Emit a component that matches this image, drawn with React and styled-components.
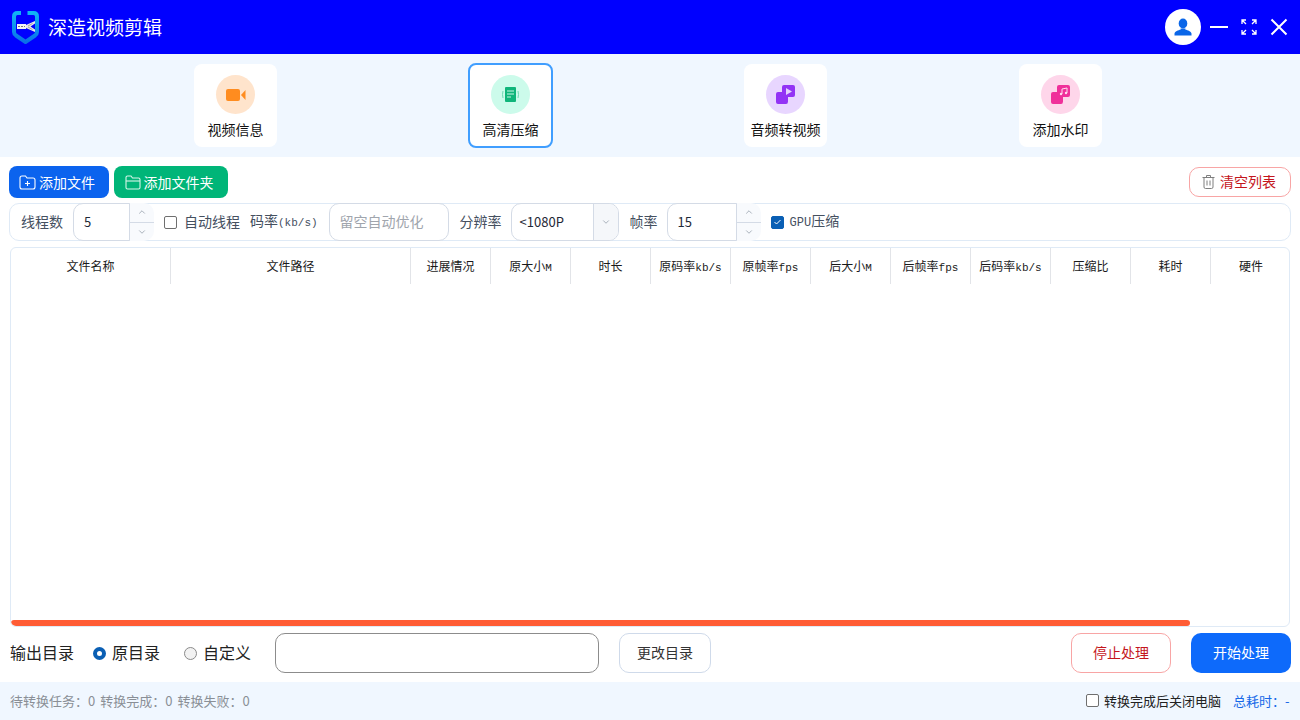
import React from 'react';
import styled, { createGlobalStyle } from 'styled-components';
import { ChevronUp, ChevronDown } from 'lucide-react';

const GlobalStyle = createGlobalStyle`
  html, body { margin: 0; padding: 0; background: #fff; }
  * { box-sizing: border-box; }
  body { font-family: "Noto Sans CJK SC", "Noto Sans", sans-serif; }
`;

const Page = styled.div`
  width: 1300px;
  height: 720px;
  display: flex;
  flex-direction: column;
  overflow: hidden;
`;

const TitleBar = styled.header`
  height: 54px;
  flex: none;
  background: #0000ff;
  display: flex;
  align-items: center;
  padding-left: 12px;
  color: #fff;
`;

const AppName = styled.div`
  margin-left: 9px;
  font-size: 19px;
  line-height: 26px;
`;

const WindowControls = styled.div`
  margin-left: auto;
  display: flex;
  align-items: center;
`;

const Avatar = styled.div`
  width: 36px;
  height: 36px;
  border-radius: 50%;
  background: #fff;
  display: flex;
  align-items: center;
  justify-content: center;
`;

const WinButton = styled.div`
  display: flex;
  margin-left: ${({ $ml }) => $ml}px;
  margin-right: ${({ $mr }) => $mr || 0}px;
`;

const NavBand = styled.nav`
  height: 103px;
  flex: none;
  background: #f0f7ff;
  display: grid;
  grid-template-columns: repeat(4, 275px);
  padding-left: 98px;
  align-items: center;
  justify-items: center;
`;

const NavCard = styled.div`
  width: ${({ $active }) => ($active ? 85 : 83)}px;
  height: ${({ $active }) => ($active ? 85 : 83)}px;
  background: #fff;
  border-radius: 8px;
  border: ${({ $active }) => ($active ? '2px solid #409eff' : 'none')};
  display: flex;
  flex-direction: column;
  align-items: center;
  padding-top: ${({ $active }) => ($active ? 10 : 11)}px;
`;

const NavCircle = styled.div`
  width: 39px;
  height: 39px;
  border-radius: 50%;
  background: ${({ $bg }) => $bg};
  display: flex;
  align-items: center;
  justify-content: center;
`;

const NavLabel = styled.div`
  margin-top: 5px;
  font-size: 14px;
  line-height: 20px;
  color: #111;
  white-space: nowrap;
`;

const Main = styled.main`
  flex: 1;
  min-height: 0;
  display: flex;
  flex-direction: column;
  padding: 9px 9px 9px;
`;

const Toolbar = styled.div`
  height: 32px;
  flex: none;
  display: flex;
  align-items: center;
  gap: 5px;
`;

const ActionButton = styled.button`
  height: 32px;
  width: ${({ $w }) => $w}px;
  border: none;
  border-radius: 8px;
  background: ${({ $bg }) => $bg};
  color: #fff;
  font: inherit;
  font-size: 14px;
  display: flex;
  align-items: center;
  justify-content: center;
  gap: 3px;
  padding: 0 4px 1px 0;
  svg { margin-top: 1px; }
`;

const OutlineButton = styled.button`
  height: ${({ $h }) => $h}px;
  width: ${({ $w }) => $w}px;
  background: #fff;
  border: 1px solid ${({ $danger }) => ($danger ? '#f8a5a5' : '#cfdaea')};
  border-radius: ${({ $r }) => $r}px;
  color: ${({ $danger }) => ($danger ? '#c4161c' : '#333')};
  font: inherit;
  font-size: 14px;
  display: flex;
  align-items: center;
  justify-content: center;
  gap: 5px;
  padding: 0 0 2px 0;
`;

const ClearButton = styled(OutlineButton)`
  margin-left: auto;
  padding: 0 2px 2px 0;
  svg { margin-top: 2px; }
`;

const ParamRow = styled.div`
  height: 38px;
  flex: none;
  margin-top: 5px;
  border: 1px solid #dfeaf6;
  border-radius: 10px;
  display: flex;
  align-items: center;
  padding-left: 11px;
  color: #45505f;
  font-size: 14px;
`;

const ParamLabel = styled.span`
  margin-left: ${({ $ml }) => $ml || 0}px;
  padding-bottom: 2px;
  white-space: nowrap;
  line-height: 20px;
`;

const Mono = styled.span`
  font-family: "Liberation Mono", monospace;
  font-size: ${({ $size }) => $size || 11}px;
`;

const FieldBox = styled.div`
  height: 38px;
  width: ${({ $w }) => $w}px;
  margin-left: ${({ $ml }) => $ml}px;
  flex: none;
  display: flex;
  align-items: center;
  border: 1px solid #d4dbe6;
  border-radius: ${({ $right }) => ($right ? '10px' : '10px 0 0 10px')};
  background: #fff;
  padding: 0 0 2px 10px;
  font-size: ${({ $muted }) => ($muted ? 14 : 13)}px;
  color: ${({ $muted }) => ($muted ? '#a0a5ad' : '#1f2937')};
`;

const Spinner = styled.div`
  width: 24px;
  height: 38px;
  flex: none;
  display: flex;
  flex-direction: column;
  background: #f8fafd;
  border-radius: 0 10px 10px 0;
  color: #9aa3af;
`;

const SpinHalf = styled.div`
  flex: 1;
  display: flex;
  align-items: center;
  justify-content: center;
  border-top: ${({ $line }) => ($line ? '1px solid #d4dbe6' : 'none')};
`;

const SelectBox = styled.div`
  height: 38px;
  width: 108px;
  margin-left: 9px;
  flex: none;
  display: flex;
  border: 1px solid #d4dbe6;
  border-radius: 10px;
  background: #fff;
  overflow: hidden;
  font-size: 13px;
  color: #1f2937;
`;

const SelectValue = styled.div`
  flex: 1;
  display: flex;
  align-items: center;
  padding: 0 0 2px 8px;
`;

const SelectArrow = styled.div`
  width: 25px;
  display: flex;
  align-items: center;
  justify-content: center;
  background: #f5f7fa;
  border-left: 1px solid #d4dbe6;
  color: #9aa3af;
`;

const CheckMark = styled.span`
  width: 13px;
  height: 13px;
  flex: none;
  margin-left: ${({ $ml }) => $ml || 0}px;
  border-radius: 2px;
  border: 1px solid ${({ $checked }) => ($checked ? '#0a5fb4' : '#6f6f6f')};
  background: ${({ $checked }) => ($checked ? '#0a5fb4' : '#fff')};
  display: flex;
  align-items: center;
  justify-content: center;
`;

const TableBox = styled.section`
  flex: 1;
  min-height: 0;
  margin: 6px 1px 0;
  border: 1px solid #dfeaf6;
  border-radius: 6px;
  position: relative;
  overflow: hidden;
`;

const HeadRow = styled.div`
  display: grid;
  grid-template-columns: 160px 240px repeat(11, 80px);
  height: 36px;
  color: #1a1a1a;
  font-size: 12px;
`;

const HeadCell = styled.div`
  display: flex;
  align-items: center;
  justify-content: center;
  padding-bottom: 2px;
  border-right: 1px solid #e2e4e8;
  white-space: nowrap;
  &:last-child { border-right: none; }
`;

const ScrollThumb = styled.div`
  position: absolute;
  left: 0;
  bottom: 0;
  width: 1179px;
  height: 6px;
  border-radius: 3px;
  background: #ff5c35;
`;

const OutputRow = styled.div`
  height: 40px;
  flex: none;
  margin-top: 6px;
  display: flex;
  align-items: center;
  color: #222;
`;

const OutputTitle = styled.span`
  margin-left: 1px;
  padding-bottom: 2px;
  font-size: 16px;
  line-height: 22px;
`;

const Radio = styled.span`
  width: 13px;
  height: 13px;
  flex: none;
  margin-left: ${({ $ml }) => $ml}px;
  border-radius: 50%;
  border: ${({ $on }) => ($on ? '4px solid #0a5fb4' : '1px solid #8a8a8a')};
  background: ${({ $on }) => ($on ? '#fff' : '#f2f2f2')};
`;

const RadioText = styled.span`
  margin-left: 6px;
  padding-bottom: 2px;
  font-size: 16px;
  line-height: 22px;
`;

const PathInput = styled.div`
  width: 324px;
  height: 40px;
  margin-left: 24px;
  border: 1px solid #8c8c8c;
  border-radius: 10px;
`;

const ChangeDirSlot = styled.div`
  margin-left: 20px;
`;

const RunGroup = styled.div`
  margin-left: auto;
  display: flex;
  gap: 20px;
`;

const StartButton = styled(ActionButton)`
  height: 40px;
  width: 100px;
  border-radius: 10px;
  padding: 0 0 2px;
`;

const StatusBar = styled.footer`
  height: 38px;
  flex: none;
  background: #f0f7ff;
  display: flex;
  align-items: center;
  padding: 0 9px 2px 10px;
  font-size: 13px;
  color: #8a8f96;
`;

const StatusText = styled.span`
  margin-right: 5px;
`;

const StatusRight = styled.div`
  margin-left: auto;
  display: flex;
  align-items: center;
`;

const ShutdownText = styled.span`
  margin-left: 5px;
  color: #222;
`;

const TotalTime = styled.span`
  margin-left: 12px;
  min-width: 58px;
  color: #1568e8;
`;

const Logo = () => (
  <svg width="27" height="33" viewBox="0 0 27 33">
    <defs>
      <linearGradient id="shield" x1="0" y1="0" x2="0" y2="1">
        <stop offset="0" stopColor="#10b4f5" />
        <stop offset="1" stopColor="#0a70e8" />
      </linearGradient>
    </defs>
    <path
      d="M9 2H5.500Q2 2 2 5.500V21Q2 23 4 24.500L13.500 31L23 24.500Q25 23 25 21V5.500Q25 2 21.500 2H15.500"
      fill="none"
      stroke="url(#shield)"
      strokeWidth="4"
    />
    <path d="M5 13H14V18H5Z" fill="#f4f4f4" />
    <path d="M6 15.500H13" stroke="#777" strokeWidth="1" strokeDasharray="2 1" />
    <path d="M14 14L23 10V12.500L18.500 15.500L23 18.500V21L14 17Z" fill="#e8e8e8" />
    <path d="M16 15L20.500 12.500M16 16L20.500 18.500" stroke="#888" strokeWidth="0.7" />
  </svg>
);

const UserIcon = () => (
  <svg width="18" height="18" viewBox="0 0 18 18" fill="#0a66e8">
    <ellipse cx="9" cy="5.500" rx="4.300" ry="5" />
    <path d="M6.500 10.500L6.800 11.500C4 12.500 1 13 .500 15.500V17.500H17.500V15.500C17 13 14 12.500 11.200 11.500L11.500 10.500Z" />
  </svg>
);

const ExpandIcon = () => (
  <svg width="16" height="16" viewBox="0 0 16 16" fill="none" stroke="#fff" strokeWidth="1.300">
    <path d="M1 5V1H5M1 1L5 5M11 1H15V5M15 1L11 5M1 11V15H5M1 15L5 11M11 15H15V11M15 15L11 11" />
  </svg>
);

const VideoIcon = () => (
  <svg width="20" height="14" viewBox="0 0 20 14" fill="#ff8c1f">
    <rect x="0" y="1" width="14" height="12" rx="2" />
    <path d="M15 7L19.500 2V12Z" />
  </svg>
);

const CompressIcon = () => (
  <svg width="17" height="16" viewBox="0 0 17 16">
    <rect x="3" y="0" width="11" height="15" rx="1" fill="#0fb57a" />
    <path d="M5 4H12M5 7H12M5 10H9" stroke="#c8f5e3" strokeWidth="1" />
    <path d="M1 4Q0 7.500 1 11M16 4Q17 7.500 16 11" fill="none" stroke="#6fd9b2" strokeWidth="1" />
  </svg>
);

const PlayStackIcon = () => (
  <svg width="19" height="19" viewBox="0 0 19 19">
    <path d="M8 0H17Q19 0 19 2V10Q19 12 17 12H12V16.500Q12 19 10 19H2Q0 19 0 17V9Q0 7 2 7H6V2Q6 0 8 0Z" fill="#9333f5" />
    <path d="M10 3L16 6.500L10 10Z" fill="#e4d2fd" />
  </svg>
);

const MusicStackIcon = () => (
  <svg width="19" height="19" viewBox="0 0 19 19">
    <path d="M8 0H17Q19 0 19 2V10Q19 12 17 12H12V16.500Q12 19 10 19H2Q0 19 0 17V9Q0 7 2 7H6V2Q6 0 8 0Z" fill="#f0309a" />
    <path d="M11 9V4L16 3V8" fill="none" stroke="#ffdcef" strokeWidth="1" />
    <circle cx="10" cy="9" r="1.200" fill="#ffdcef" />
    <circle cx="15" cy="8" r="1.200" fill="#ffdcef" />
  </svg>
);

const FolderPlusIcon = () => (
  <svg width="17" height="15" viewBox="0 0 17 15" fill="none" stroke="#fff" strokeWidth="1.100">
    <path d="M1 3Q1 1 3 1H6.500L8 3H14Q16 3 16 5V12Q16 14 14 14H3Q1 14 1 12Z" />
    <path d="M8.500 6V11M6 8.500H11" />
  </svg>
);

const FolderIcon = () => (
  <svg width="16" height="15" viewBox="0 0 16 15" fill="none" stroke="#d8f5ea" strokeWidth="1.100">
    <path d="M1 2.500Q1 1 2.500 1H6L7.500 3H13.500Q15 3 15 4.500V12.500Q15 14 13.500 14H2.500Q1 14 1 12.500Z" />
    <path d="M1 6H15" />
  </svg>
);

const TrashIcon = () => (
  <svg width="13" height="14" viewBox="0 0 13 14" fill="none" stroke="#7f7f7f" strokeWidth="1">
    <path d="M.500 2.500H12.500M4.500 2.500V.500H8.500V2.500M2 2.500V12Q2 13.500 3.500 13.500H9.500Q11 13.500 11 12V2.500M5 5.500V10.500M8 5.500V10.500" />
  </svg>
);

const navItems = [
  { label: '视频信息', bg: '#ffe4cc', icon: <VideoIcon /> },
  { label: '高清压缩', bg: '#ccfbeb', icon: <CompressIcon />, active: true },
  { label: '音频转视频', bg: '#e8d6ff', icon: <PlayStackIcon /> },
  { label: '添加水印', bg: '#fed6ea', icon: <MusicStackIcon /> },
];

const columns = [
  ['文件名称'],
  ['文件路径'],
  ['进展情况'],
  ['原大小', 'M'],
  ['时长'],
  ['原码率', 'kb/s'],
  ['原帧率', 'fps'],
  ['后大小', 'M'],
  ['后帧率', 'fps'],
  ['后码率', 'kb/s'],
  ['压缩比'],
  ['耗时'],
  ['硬件'],
];

const NumberField = ({ value, width, ml }) => (
  <>
    <FieldBox $w={width} $ml={ml}>{value}</FieldBox>
    <Spinner>
      <SpinHalf><ChevronUp size={10} /></SpinHalf>
      <SpinHalf $line><ChevronDown size={10} /></SpinHalf>
    </Spinner>
  </>
);

const App = () => (
  <Page>
    <GlobalStyle />
    <TitleBar>
      <Logo />
      <AppName>深造视频剪辑</AppName>
      <WindowControls>
        <Avatar><UserIcon /></Avatar>
        <WinButton $ml={9}>
          <svg width="18" height="2"><rect width="18" height="2" fill="#fff" /></svg>
        </WinButton>
        <WinButton $ml={13}><ExpandIcon /></WinButton>
        <WinButton $ml={13} $mr={12}>
          <svg width="18" height="18" viewBox="0 0 18 18" stroke="#fff" strokeWidth="2">
            <path d="M1.500 1.500L16.500 16.500M16.500 1.500L1.500 16.500" />
          </svg>
        </WinButton>
      </WindowControls>
    </TitleBar>

    <NavBand>
      {navItems.map((item) => (
        <NavCard key={item.label} $active={item.active}>
          <NavCircle $bg={item.bg}>{item.icon}</NavCircle>
          <NavLabel>{item.label}</NavLabel>
        </NavCard>
      ))}
    </NavBand>

    <Main>
      <Toolbar>
        <ActionButton $w={100} $bg="#0b63ee"><FolderPlusIcon />添加文件</ActionButton>
        <ActionButton $w={114} $bg="#00b578"><FolderIcon />添加文件夹</ActionButton>
        <ClearButton $danger $w={102} $h={30} $r={10}><TrashIcon />清空列表</ClearButton>
      </Toolbar>

      <ParamRow>
        <ParamLabel>线程数</ParamLabel>
        <NumberField value="5" width={57} ml={10} />
        <CheckMark $ml={10} />
        <ParamLabel $ml={7}>自动线程</ParamLabel>
        <ParamLabel $ml={10}>码率<Mono>(kb/s)</Mono></ParamLabel>
        <FieldBox $w={120} $ml={11} $right $muted>留空自动优化</FieldBox>
        <ParamLabel $ml={11}>分辨率</ParamLabel>
        <SelectBox>
          <SelectValue>&lt;1080P</SelectValue>
          <SelectArrow><ChevronDown size={10} /></SelectArrow>
        </SelectBox>
        <ParamLabel $ml={11}>帧率</ParamLabel>
        <NumberField value="15" width={70} ml={9} />
        <CheckMark $ml={10} $checked>
          <svg width="7" height="6" viewBox="0 0 7 6" fill="none" stroke="#fff" strokeWidth="1">
            <path d="M.500 3L2.500 5L6.500 1" />
          </svg>
        </CheckMark>
        <ParamLabel $ml={6}><Mono $size={12}>GPU</Mono>压缩</ParamLabel>
      </ParamRow>

      <TableBox>
        <HeadRow>
          {columns.map(([name, unit]) => (
            <HeadCell key={name + (unit || '')}>
              <span>
                {name}
                {unit && <Mono>{unit}</Mono>}
              </span>
            </HeadCell>
          ))}
        </HeadRow>
        <ScrollThumb />
      </TableBox>

      <OutputRow>
        <OutputTitle>输出目录</OutputTitle>
        <Radio $on $ml={19} />
        <RadioText>原目录</RadioText>
        <Radio $ml={24} />
        <RadioText>自定义</RadioText>
        <PathInput />
        <ChangeDirSlot>
          <OutlineButton $w={92} $h={40} $r={10}>更改目录</OutlineButton>
        </ChangeDirSlot>
        <RunGroup>
          <OutlineButton $danger $w={100} $h={40} $r={10}>停止处理</OutlineButton>
          <StartButton $bg="#0d6afb">开始处理</StartButton>
        </RunGroup>
      </OutputRow>
    </Main>

    <StatusBar>
      <StatusText>待转换任务：0</StatusText>
      <StatusText>转换完成：0</StatusText>
      <StatusText>转换失败：0</StatusText>
      <StatusRight>
        <CheckMark />
        <ShutdownText>转换完成后关闭电脑</ShutdownText>
        <TotalTime>总耗时：-</TotalTime>
      </StatusRight>
    </StatusBar>
  </Page>
);

export default App;
